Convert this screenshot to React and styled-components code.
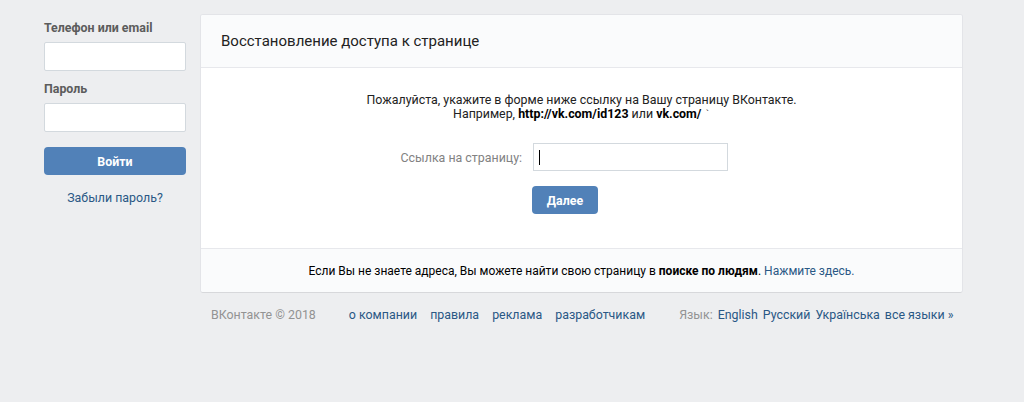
import React from "react";
import styled, { createGlobalStyle } from "styled-components";

const Global = createGlobalStyle`
  body {
    margin: 0;
    background: #edeef0;
    font-family: Roboto, "Open Sans", "DejaVu Sans", sans-serif;
    font-size: 12.4px;
    color: #000;
  }
`;

function App() {
  return (
    <>
      <Global />
      <Page>
        <Side>
          <Label>Телефон или email</Label>
          <SideInput />
          <Label>Пароль</Label>
          <SideInput type="password" />
          <SideButton>Войти</SideButton>
          <Forgot>Забыли пароль?</Forgot>
        </Side>

        <Main>
          <Card>
            <CardHead>Восстановление доступа к странице</CardHead>
            <CardBody>
              <Intro>
                Пожалуйста, укажите в форме ниже ссылку на Вашу страницу ВКонтакте.
                <br />
                Например, <b>http://vk.com/id123</b> или <b>vk.com/</b>
                <Tick>ˋ</Tick>
              </Intro>
              <FormRow>
                <FieldLabel>Ссылка на страницу:</FieldLabel>
                <LinkInput>
                  <Caret />
                </LinkInput>
              </FormRow>
              <FormRow>
                <FieldLabel />
                <NextButton>Далее</NextButton>
              </FormRow>
            </CardBody>
            <CardFoot>
              Если Вы не знаете адреса, Вы можете найти свою страницу в <b>поиске по людям</b>.{" "}
              <Link>Нажмите здесь.</Link>
            </CardFoot>
          </Card>

          <Footer>
            <Muted>ВКонтакте © 2018</Muted>
            <FooterLinks>
              <Link>о компании</Link>
              <Link>правила</Link>
              <Link>реклама</Link>
              <Link>разработчикам</Link>
            </FooterLinks>
            <Langs>
              <Muted>Язык:</Muted>
              <Link>English</Link>
              <Link>Русский</Link>
              <Link>Українська</Link>
              <Link>все языки »</Link>
            </Langs>
          </Footer>
        </Main>
      </Page>
    </>
  );
}

export default App;

const Page = styled.div`
  display: flex;
  align-items: flex-start;
  padding: 15px 0 0 44px;
  height: 387px;
`;

const Side = styled.div`
  width: 142px;
  display: flex;
  flex-direction: column;
  padding-top: 5px;
  margin-right: 15px;
`;

const Label = styled.div`
  font-weight: 700;
  color: #5c5c5c;
  font-size: 12.4px;
  line-height: 16px;
  margin-bottom: 6px;
`;

const SideInput = styled.input`
  box-sizing: border-box;
  width: 142px;
  height: 29px;
  border: 1px solid #d3d9de;
  border-radius: 2px;
  background: #fff;
  margin: 0 0 10px;
  outline: none;
`;

const SideButton = styled.div`
  height: 28px;
  margin-top: 5px;
  background: #5181b8;
  color: #fff;
  border-radius: 4px;
  font-weight: 700;
  display: flex;
  align-items: center;
  justify-content: center;
`;

const Forgot = styled.div`
  margin-top: 15px;
  text-align: center;
  color: #2a5885;
`;

const Main = styled.div`
  width: 761px;
`;

const Card = styled.div`
  background: #fff;
  border-radius: 2px;
  box-shadow: 0 1px 0 0 #d7d8db, 0 0 0 1px #e3e4e8;
  overflow: hidden;
`;

const CardHead = styled.div`
  height: 52px;
  display: flex;
  align-items: center;
  padding-left: 20px;
  background: #fafbfc;
  border-bottom: 1px solid #e7e8ec;
  font-size: 15px;
  color: #222;
`;

const CardBody = styled.div`
  padding: 25px 0 34px;
  display: flex;
  flex-direction: column;
  align-items: center;
`;

const Intro = styled.div`
  text-align: center;
  line-height: 14px;
  color: #222;
  margin-bottom: 22px;
  b {
    color: #000;
  }
`;

const Tick = styled.span`
  margin-left: 4px;
  font-size: 9px;
  vertical-align: top;
`;

const FormRow = styled.div`
  align-self: flex-start;
  display: flex;
  align-items: center;
  padding-left: 180px;
  & + & {
    margin-top: 15px;
  }
`;

const FieldLabel = styled.div`
  width: 141px;
  white-space: nowrap;
  text-align: right;
  color: #828282;
  margin-right: 11px;
`;

const LinkInput = styled.div`
  box-sizing: border-box;
  width: 195px;
  height: 28px;
  border: 1px solid #d3d9de;
  background: #fff;
  display: flex;
  align-items: center;
  padding-left: 5px;
`;

const Caret = styled.span`
  width: 1px;
  height: 15px;
  background: #000;
`;

const NextButton = styled.div`
  width: 66px;
  height: 28px;
  margin-left: -1px;
  background: #5181b8;
  color: #fff;
  border-radius: 4px;
  font-weight: 700;
  display: flex;
  align-items: center;
  justify-content: center;
`;

const CardFoot = styled.div`
  height: 43px;
  display: flex;
  align-items: center;
  justify-content: center;
  background: #fafbfc;
  border-top: 1px solid #e7e8ec;
  color: #000;
  white-space: pre;
  font-size: 12px;
`;

const Link = styled.span`
  color: #2a5885;
`;

const Muted = styled.span`
  color: #939393;
`;

const Footer = styled.div`
  display: flex;
  align-items: center;
  padding: 15px 0 0 10px;
`;

const FooterLinks = styled.div`
  display: flex;
  gap: 13px;
  margin-left: 33px;
`;

const Langs = styled.div`
  display: flex;
  gap: 5px;
  margin-left: 34px;
`;
